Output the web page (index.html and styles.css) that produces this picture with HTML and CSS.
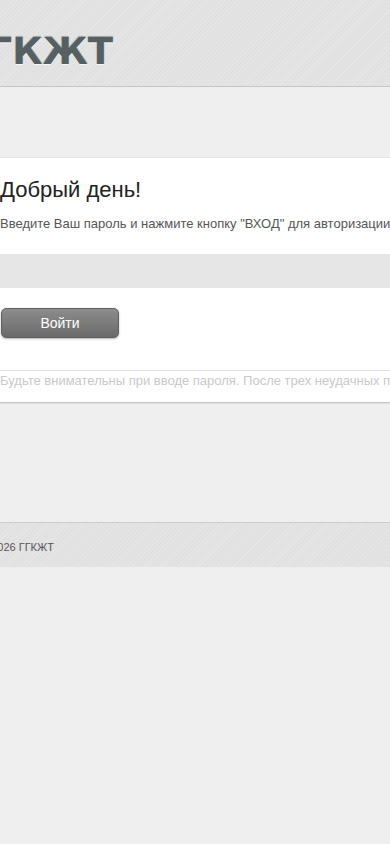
FILE: index.html
```html
<!DOCTYPE html>
<html lang="ru">
<head>
    <meta charset="UTF-8">
    <meta name="viewport" content="width=device-width, initial-scale=1.0">
    <title>ГГКЖТ — Вход</title>
    <link rel="stylesheet" href="styles.css">
</head>
<body>

<div class="header">
    <div class="logo">ГГКЖТ</div>
</div>

<div class="login">
    <div class="welcome">
        <h1>Добрый день!</h1>
        <p>Введите Ваш пароль и нажмите кнопку "ВХОД" для авторизации в системе</p>
    </div>

    <div class="field-band"></div>

    <div class="actions">
        <button class="btn-login" type="button">Войти</button>
        <div class="warning">Будьте внимательны при вводе пароля. После трех неудачных попыток вход будет заблокирован.</div>
    </div>
</div>

<div class="footer">
    <p>&copy; 2026 ГГКЖТ</p>
</div>

</body>
</html>
```

FILE: styles.css
```css
body {
    margin: 0;
    padding: 0;
    font-family: "Liberation Sans", Arial, sans-serif;
    background-color: #efefef;
    overflow-x: hidden;
}

/* текстура шапки и подвала */
.header,
.footer {
    background-color: #e1e1e1;
    background-image: repeating-linear-gradient(135deg, rgba(255, 255, 255, 0.18) 0, rgba(255, 255, 255, 0.18) 1px, transparent 1px, transparent 3px);
}

.header {
    height: 86px;
    border-bottom: 1px solid #c6c6c6;
    overflow: hidden;
}

.logo {
    margin-left: -35px;
    padding-top: 29px;
    font-family: "DejaVu Sans", Verdana, sans-serif;
    font-size: 37px;
    font-weight: bold;
    line-height: 46px;
    color: #566063;
    white-space: nowrap;
    text-shadow: 0 1px 0 rgba(255, 255, 255, 0.7), 0 -1px 1px rgba(0, 0, 0, 0.3);
}

.login {
    margin-top: 70px;
    background-color: #ffffff;
    border-top: 1px solid #e6e6e6;
    border-bottom: 1px solid #c4c4c4;
    box-shadow: 0 1px 1px rgba(0, 0, 0, 0.06);
}

.welcome {
    padding: 19px 0 22px 0;
    white-space: nowrap;
    overflow: hidden;
}

.welcome h1 {
    margin: 0;
    font-size: 22px;
    font-weight: normal;
    line-height: 26px;
    color: #222222;
}

.welcome p {
    margin: 12px 0 0 0;
    font-size: 13px;
    line-height: 17px;
    color: #555555;
}

.field-band {
    height: 34px;
    background-color: #e6e6e6;
}

.actions {
    padding-top: 20px;
}

.btn-login {
    display: block;
    margin-left: 1px;
    width: 118px;
    height: 30px;
    border: 1px solid #5f5f5f;
    border-radius: 5px;
    background: linear-gradient(#8c8c8c, #6a6a6a);
    box-shadow: 0 1px 2px rgba(0, 0, 0, 0.3);
    color: #ffffff;
    font-family: "Liberation Sans", Arial, sans-serif;
    font-size: 14px;
    cursor: pointer;
}

.btn-login:hover {
    background: linear-gradient(#7a7a7a, #5a5a5a);
}

.warning {
    margin-top: 32px;
    border-top: 1px solid #e3e3e3;
    padding: 1px 0 13px 0;
    font-size: 13px;
    line-height: 17px;
    color: #c9c9c9;
    white-space: nowrap;
    overflow: hidden;
}

.footer {
    margin-top: 119px;
    height: 44px;
    border-top: 1px solid #cccccc;
    overflow: hidden;
}

.footer p {
    margin: 17px 0 0 -20px;
    font-size: 11px;
    line-height: 14px;
    color: #555555;
    white-space: nowrap;
}
```
